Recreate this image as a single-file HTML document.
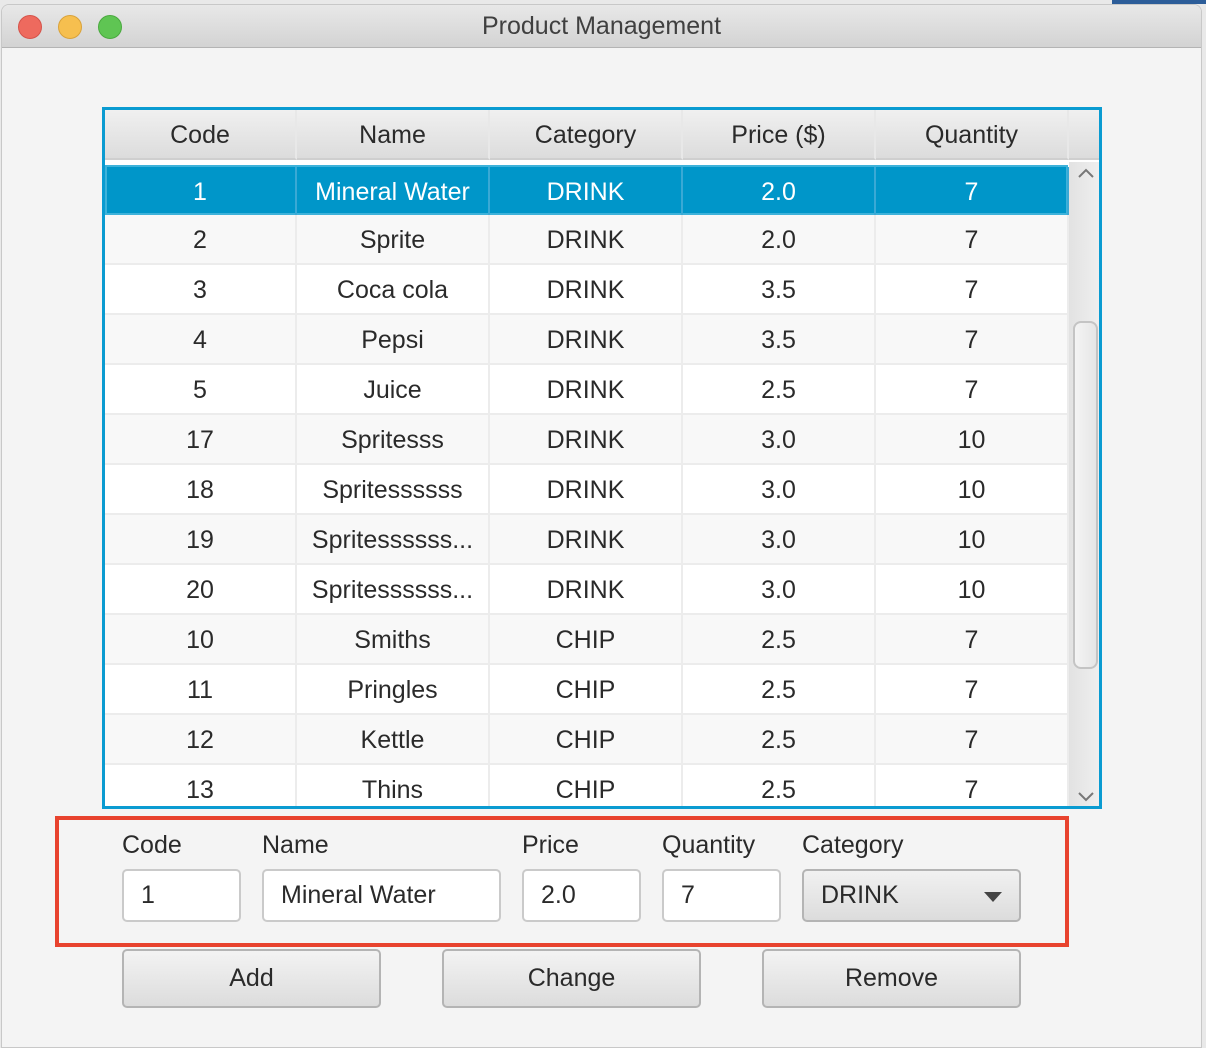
<!DOCTYPE html>
<html><head><style>
*{box-sizing:border-box;margin:0;padding:0}
body{width:1206px;height:1048px;background:#e9e9e9;position:relative;overflow:hidden;font-family:"Liberation Sans",sans-serif;color:#2a2a2a}
.strip{position:absolute;left:1112px;top:0;width:94px;height:4px;background:#2c5d99}
.win{position:absolute;left:1px;top:4px;width:1201px;height:1044px;background:#f4f4f4;border:1px solid #c8c8c8;border-radius:8px 8px 0 0;overflow:hidden}
.title{height:43px;background:linear-gradient(#e8e8e8,#d3d3d3);border-bottom:1px solid #b4b4b4;text-align:center;font-size:25px;line-height:43px;color:#404040}
.dot{position:absolute;top:10px;width:24px;height:24px;border-radius:50%}
.a{position:absolute}
.tbl{left:100px;top:102px;width:1000px;height:702px;border:3px solid #0a9bd1;background:#fff;overflow:hidden}
.hd{position:absolute;top:0;height:50px;background:linear-gradient(#f0f0f0,#dcdcdc);border-right:2px solid #e8e8e8;border-bottom:2px solid #cfcfcf;font-size:25px;text-align:center;line-height:50px}
.row{position:absolute;left:0;width:963px;height:50px;font-size:25px;line-height:50px;border-bottom:2px solid #ececec}
.row div{position:absolute;top:0;height:50px;text-align:center;border-right:2px solid #ececec}
.sel{background:#0096c9;color:#fff;border:2px solid #3eb2da}
.sel div{border-right-color:#3aa9d5}
.lbl{font-size:25px}
.fld{height:53px;border:2px solid #cacaca;border-radius:5px;background:#fff;font-size:25px;line-height:49px;padding-left:17px}
.btn{height:59px;width:259px;border:2px solid #b4b4b4;border-radius:5px;background:linear-gradient(#f3f3f3,#dcdcdc);font-size:25px;text-align:center;line-height:55px}
</style></head><body>
<div class="strip"></div>
<div class="win">
<div class="title">Product Management</div>
<div class="dot" style="left:16px;background:#ee6a5e;border:1px solid #d5534a"></div>
<div class="dot" style="left:56px;background:#f6bf4f;border:1px solid #d9a23a"></div>
<div class="dot" style="left:96px;background:#5fc553;border:1px solid #4aa93f"></div>

<div class="a tbl">
<div class="hd" style="left:0;width:192px">Code</div>
<div class="hd" style="left:192px;width:193px">Name</div>
<div class="hd" style="left:385px;width:193px">Category</div>
<div class="hd" style="left:578px;width:193px">Price ($)</div>
<div class="hd" style="left:771px;width:193px">Quantity</div>
<div class="hd" style="left:964px;width:33px;border-right:none"></div>
<div style="position:absolute;left:964px;top:52px;width:33px;height:650px;background:linear-gradient(90deg,#e2e2e2,#f0f0f0)"></div>
<div style="position:absolute;left:968px;top:211px;width:25px;height:348px;border:2px solid #c4c4c4;border-radius:8px;background:linear-gradient(90deg,#f4f4f4,#e6e6e6)"></div>
<svg style="position:absolute;left:972px;top:58px" width="18" height="12"><path d="M2 9 L9 2 L16 9" fill="none" stroke="#777" stroke-width="2"/></svg>
<svg style="position:absolute;left:972px;top:680px" width="18" height="12"><path d="M2 3 L9 10 L16 3" fill="none" stroke="#777" stroke-width="2"/></svg>
<div id="rows"></div>
</div>

<div class="a" style="left:53px;top:811px;width:1014px;height:131px;border:4px solid #e8432e"></div>
<div class="a lbl" style="left:120px;top:826px">Code</div>
<div class="a lbl" style="left:260px;top:826px">Name</div>
<div class="a lbl" style="left:520px;top:826px">Price</div>
<div class="a lbl" style="left:660px;top:826px">Quantity</div>
<div class="a lbl" style="left:800px;top:826px">Category</div>
<div class="a fld" style="left:120px;top:864px;width:119px">1</div>
<div class="a fld" style="left:260px;top:864px;width:239px">Mineral Water</div>
<div class="a fld" style="left:520px;top:864px;width:119px">2.0</div>
<div class="a fld" style="left:660px;top:864px;width:119px">7</div>
<div class="a fld" style="left:800px;top:864px;width:219px;border-color:#b4b4b4;background:linear-gradient(#f1f1f1,#dcdcdc)">DRINK<svg style="position:absolute;right:16px;top:20px" width="20" height="12"><path d="M1 1 L19 1 L10 11 Z" fill="#444"/></svg></div>
<div class="a btn" style="left:120px;top:944px">Add</div>
<div class="a btn" style="left:440px;top:944px">Change</div>
<div class="a btn" style="left:760px;top:944px">Remove</div>
</div>
<script>
var d=[["1","Mineral Water","DRINK","2.0","7"],["2","Sprite","DRINK","2.0","7"],["3","Coca cola","DRINK","3.5","7"],["4","Pepsi","DRINK","3.5","7"],["5","Juice","DRINK","2.5","7"],["17","Spritesss","DRINK","3.0","10"],["18","Spritessssss","DRINK","3.0","10"],["19","Spritessssss...","DRINK","3.0","10"],["20","Spritessssss...","DRINK","3.0","10"],["10","Smiths","CHIP","2.5","7"],["11","Pringles","CHIP","2.5","7"],["12","Kettle","CHIP","2.5","7"],["13","Thins","CHIP","2.5","7"]];
var L=[0,192,385,578,771],W=[192,193,193,193,193],h="";
d.forEach(function(r,i){var cls=i==0?"row sel":"row";var bg=i==0?"":(i%2?"background:#f8f8f8;":"background:#fff;");
h+='<div class="'+cls+'" style="top:'+(55+i*50)+'px;'+bg+'">';
r.forEach(function(c,j){h+='<div style="left:'+(L[j]-(i==0?2:0))+'px;width:'+W[j]+'px">'+c+'</div>'});
h+='</div>';});
document.getElementById("rows").innerHTML=h;
</script>
</body></html>
